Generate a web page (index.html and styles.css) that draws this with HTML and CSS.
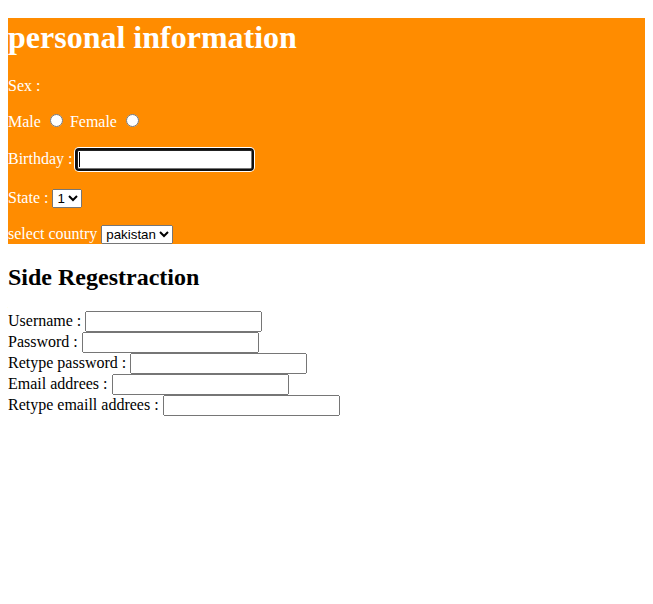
FILE: index.html
```html
<!DOCTYPE html>
<html>
<head>
<meta charset="utf-8">
<title>personal information</title>
<link rel="stylesheet" href="styles.css">
</head>
<body>
<div class="personal">
  <h1 class="title">personal information</h1>
  <p>Sex :</p>
  <p>Male <input type="radio" name="sex"> Female <input type="radio" name="sex"></p>
  <p>Birthday : <span class="caret-wrap"><input type="text" class="field is-focused"><span class="caret"></span></span></p>
  <p>State : <select class="pick"><option>1</option><option>2</option></select></p>
  <p>select country <select class="pick"><option>pakistan</option></select></p>
</div>
<h2 class="subtitle">Side Regestraction</h2>
<div class="register">
  Username : <input type="text" class="field"><br>
  Password : <input type="password" class="field"><br>
  Retype password : <input type="password" class="field"><br>
  Email addrees : <input type="text" class="field"><br>
  Retype emaill addrees : <input type="text" class="field">
</div>
</body>
</html>
```

FILE: styles.css
```css
body {
  margin: 8px;
  font-family: "Liberation Serif", "Times New Roman", serif;
  font-size: 16px;
  color: #000;
  background: #fff;
}

.personal {
  margin-top: 10px;
  background: #ff8c00;
  color: #fff;
}

.title {
  margin: 0 0 0.67em 0;
  font-size: 32px;
  line-height: 38px;
  font-weight: bold;
}

.personal p {
  margin: 16px 0;
}

.personal p:last-child {
  margin-bottom: 0;
}

.field {
  box-sizing: border-box;
  width: 177px;
  height: 21px;
  font-family: "Liberation Sans", Arial, sans-serif;
  font-size: 13.333px;
}

.pick {
  font-family: "Liberation Sans", Arial, sans-serif;
  font-size: 13.333px;
  margin-top: 1px;
}

.caret-wrap {
  position: relative;
  display: inline-block;
}

.is-focused {
  margin: 2px 0;
  outline: 2px solid #101010;
  outline-offset: -1px;
  border-radius: 3px;
  box-shadow: 0 0 0 2px #fff;
}

.caret {
  position: absolute;
  left: 3px;
  top: 5px;
  width: 1px;
  height: 15px;
  background: #000;
}

.subtitle {
  font-size: 24px;
  font-weight: bold;
  margin: 0.83em 0;
}
```
